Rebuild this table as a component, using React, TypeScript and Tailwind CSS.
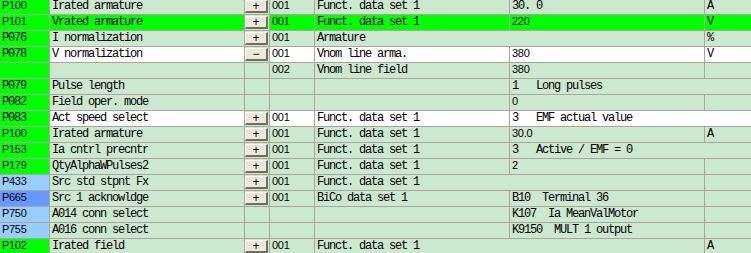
import React from 'react'

type Row = {
  id: string
  idMono?: boolean
  idBg?: 'green' | 'blue' | 'blueDark'
  name: string
  tone?: 'white' | 'green'
  btn?: '+' | '−'
  idx?: string
  text?: string
  value?: string
  valueMono?: boolean
  unit?: string
  merge56?: boolean
  merge67?: boolean
}

const rows: Row[] = [
  { id: 'P100', name: 'Irated armature', btn: '+', idx: '001', text: 'Funct. data set 1', value: '30. 0', valueMono: true, unit: 'A' },
  { id: 'P101', name: 'Vrated armature', tone: 'green', btn: '+', idx: '001', text: 'Funct. data set 1', value: '220', unit: 'V' },
  { id: 'P076', idMono: true, name: 'I normalization', btn: '+', idx: '001', text: 'Armature', merge56: true, unit: '%' },
  { id: 'P078', idMono: true, name: 'V normalization', tone: 'white', btn: '−', idx: '001', text: 'Vnom line arma.', value: '380', unit: 'V' },
  { id: '', name: '', idx: '002', text: 'Vnom line field', value: '380', unit: '' },
  { id: 'P079', idMono: true, name: 'Pulse length', value: '1   Long pulses', valueMono: true, merge67: true },
  { id: 'P082', idMono: true, name: 'Field oper. mode', value: '0', unit: '' },
  { id: 'P083', idMono: true, name: 'Act speed select', tone: 'white', btn: '+', idx: '001', text: 'Funct. data set 1', value: '3   EMF actual value', valueMono: true, merge67: true },
  { id: 'P100', name: 'Irated armature', btn: '+', idx: '001', text: 'Funct. data set 1', value: '30.0', unit: 'A' },
  { id: 'P153', name: 'Ia cntrl precntr', btn: '+', idx: '001', text: 'Funct. data set 1', value: '3   Active / EMF = 0', valueMono: true, merge67: true },
  { id: 'P179', name: 'QtyAlphaWPulses2', btn: '+', idx: '001', text: 'Funct. data set 1', value: '2', unit: '' },
  { id: 'P433', idBg: 'blue', name: 'Src std stpnt Fx', btn: '+', idx: '001', text: 'Funct. data set 1', merge56: true, unit: '' },
  { id: 'P665', idBg: 'blueDark', name: 'Src 1 acknowldge', btn: '+', idx: '001', text: 'BiCo data set 1', value: 'B10  Terminal 36', valueMono: true, unit: '' },
  { id: 'P750', idBg: 'blue', name: 'A014 conn select', value: 'K107  Ia MeanValMotor', valueMono: true, unit: '' },
  { id: 'P755', idBg: 'blue', name: 'A016 conn select', value: 'K9150  MULT 1 output', valueMono: true, unit: '' },
  { id: 'P102', name: 'Irated field', btn: '+', idx: '001', text: 'Funct. data set 1', merge56: true, unit: 'A' },
]

// SimSun-like serif mono at 6px per char, and MS Sans Serif-like digits
const mono = "font-['Liberation_Mono',monospace] text-[12px] leading-[15px] tracking-[-1.2px] text-black whitespace-pre"
const sans = "font-['Liberation_Sans',sans-serif] text-[11px] leading-[13px] tracking-[-0.3px] text-black whitespace-pre"
const cell = 'h-full border-r border-[#a8a59c] overflow-hidden'

const GridButton = ({ label }: { label: string }) => (
  <div className="mt-px h-[13px] w-[23px] flex items-center justify-center bg-[#ece9d8] border-t border-l border-t-white border-l-white border-b-2 border-r-2 border-b-[#716f64] border-r-[#716f64] font-['Liberation_Sans',sans-serif] text-[12px] leading-none text-black">
    {label}
  </div>
)

const TableRow = ({ row }: { row: Row }) => {
  const rowBg =
    row.tone === 'white' ? 'bg-white' : row.tone === 'green' ? 'bg-[#00ff00]' : 'bg-[#cce8cf]'
  const idBg =
    row.idBg === 'blue' ? 'bg-[#99ccff]' : row.idBg === 'blueDark' ? 'bg-[#6699ff]' : 'bg-[#00ff00]'

  return (
    <div className={`flex h-[16px] border-b border-[#a8a59c] ${rowBg}`}>
      <div className={`${cell} w-[50px] shrink-0 pl-[2px] ${idBg} ${row.idMono ? mono : sans}`}>
        {row.id}
      </div>
      <div className={`${cell} w-[195px] shrink-0 pl-[2px] ${mono}`}>{row.name}</div>
      <div className={`${cell} w-[25px] shrink-0 ${row.btn ? 'bg-[#cce8cf]' : ''}`}>
        {row.btn && <GridButton label={row.btn} />}
      </div>
      <div className={`${cell} w-[45px] shrink-0 pl-[2px] ${sans}`}>{row.idx}</div>
      {row.merge56 ? (
        <div className={`${cell} w-[390px] shrink-0 pl-[2px] ${mono}`}>{row.text}</div>
      ) : (
        <>
          <div className={`${cell} w-[195px] shrink-0 pl-[2px] ${mono}`}>{row.text}</div>
          {row.merge67 ? (
            <div className={`h-full flex-1 overflow-hidden pl-[2px] ${row.valueMono ? mono : sans}`}>
              {row.value}
            </div>
          ) : (
            <div className={`${cell} w-[195px] shrink-0 pl-[2px] ${row.valueMono ? mono : sans}`}>
              {row.value}
            </div>
          )}
        </>
      )}
      {!row.merge67 && (
        <div className={`h-full flex-1 overflow-hidden pl-[2px] ${mono}`}>{row.unit}</div>
      )}
    </div>
  )
}

export default function App() {
  return (
    <div className="w-[751px] h-[253px] overflow-hidden bg-[#cce8cf]">
      <div className="-mt-px">
        {rows.map((row, i) => (
          <TableRow key={i} row={row} />
        ))}
      </div>
    </div>
  )
}
